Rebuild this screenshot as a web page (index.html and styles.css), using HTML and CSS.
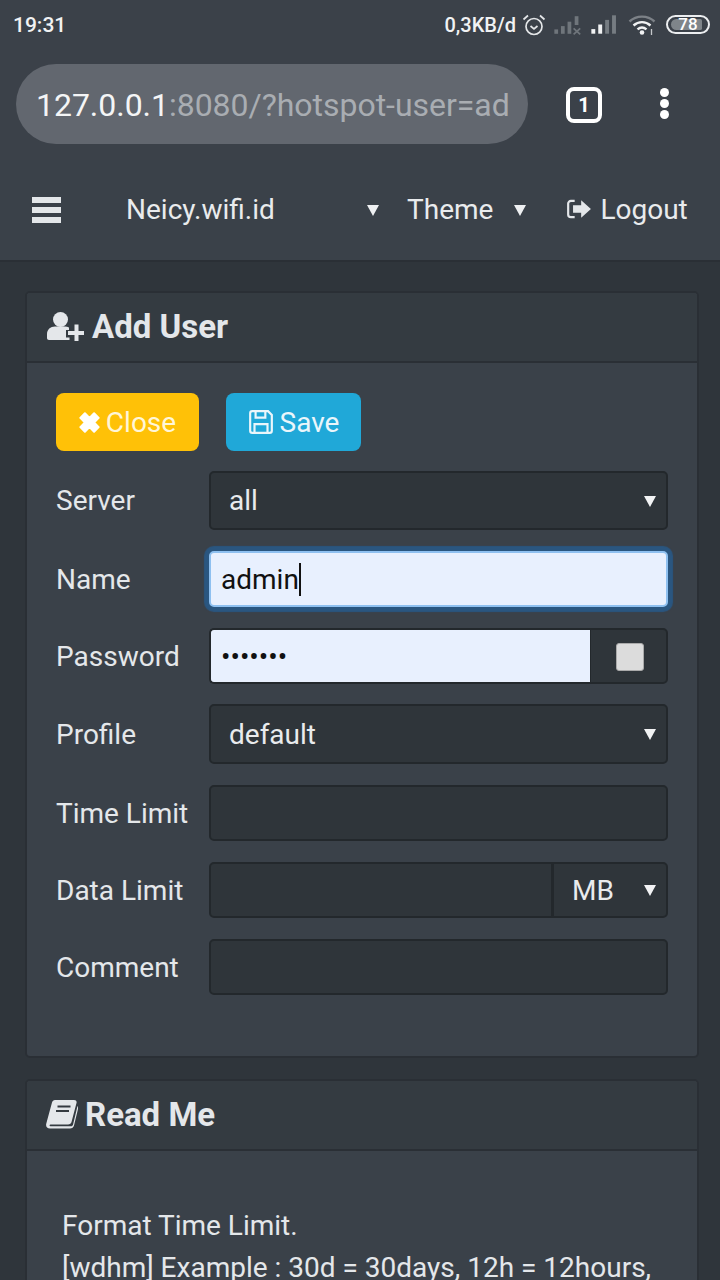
FILE: index.html
```html
<!DOCTYPE html>
<html lang="en">
<head>
<meta charset="utf-8">
<title>Add User</title>
<link rel="stylesheet" href="styles.css">
</head>
<body>
<div class="screen">
  <div class="status">
    <span class="clock">19:31</span>
    <div class="status-right">
      <span class="speed">0,3KB/d</span>
      <svg class="ic-alarm" viewBox="0 0 24 24" width="24" height="24" fill="none" stroke="#e4e6e8" stroke-width="1.7"><circle cx="12" cy="13.5" r="8"/><path d="M8.5 13l3.5 3 3.5-3"/><path d="M1.5 6.5L6 2.5M22.5 6.5L18 2.5"/></svg>
      <svg class="ic-sig1" viewBox="0 0 25 20" width="28" height="22"><g fill="#6f757b"><rect x="1" y="14" width="3.4" height="4"/><rect x="7" y="11" width="3.4" height="7"/><rect x="13" y="7" width="3.4" height="11"/><rect x="19.500" y="2" width="3.400" height="8"/></g><path d="M18.500 13l6 5.500M24.500 13l-6 5.500" stroke="#6f757b" stroke-width="1.600"/></svg>
      <svg class="ic-sig2" viewBox="0 0 24 20" width="28" height="23"><rect x="1" y="14" width="3.4" height="4" fill="#f1f2f3"/><rect x="7" y="10" width="3.4" height="8" fill="#f1f2f3"/><rect x="13" y="6" width="3.400" height="12" fill="#767c82"/><rect x="19" y="2" width="3.400" height="16" fill="#767c82"/></svg>
      <svg class="ic-wifi" viewBox="0 0 28 22" width="28" height="22" fill="none"><path d="M1.500 7.500C8.500 1 19.500 1 26.500 7.500" stroke="#7c8187" stroke-width="2.400"/><path d="M5.500 11.500C10.500 7 17.500 7 22.500 11.500" stroke="#f1f2f3" stroke-width="2.400"/><path d="M9.500 15.300C12.500 12.800 15.500 12.800 18.500 15.300" stroke="#f1f2f3" stroke-width="2.400"/><circle cx="14" cy="18.500" r="2.300" fill="#f1f2f3"/><path d="M23.500 15v6" stroke="#c5c8cb" stroke-width="1.300"/></svg>
      <div class="battery"><span class="battery-fill"></span><span class="battery-num">78</span></div>
    </div>
  </div>

  <div class="toolbar">
    <div class="urlbar"><span class="host">127.0.0.1</span><span class="path">:8080/?hotspot-user=ad</span></div>
    <div class="tabs">1</div>
    <div class="dots"><i></i><i></i><i></i></div>
  </div>

  <nav class="navbar">
    <div class="burger"><i></i><i></i><i></i></div>
    <span class="brand">Neicy.wifi.id</span>
    <svg class="tri nav-tri1" viewBox="0 0 12 12" width="12" height="12"><path d="M0 1h12L6 12z" fill="#eef0f2"/></svg>
    <span class="theme">Theme</span>
    <svg class="tri nav-tri2" viewBox="0 0 12 12" width="12" height="12"><path d="M0 1h12L6 12z" fill="#eef0f2"/></svg>
    <span class="logout">
      <svg viewBox="0 0 24 20" width="26" height="22"><path d="M8 2.500H4.500A2.500 2.500 0 0 0 2 5v10a2.500 2.500 0 0 0 2.500 2.500H8" fill="none" stroke="#e4e7ea" stroke-width="2"/><path d="M6.500 6.500h7.500V2l9 8-9 8v-4.500H6.500z" fill="#e4e7ea"/></svg>
      Logout
    </span>
  </nav>

  <main class="content">
    <section class="card card-form">
      <h3 class="card-head">
        <svg viewBox="0 0 38 30" width="38" height="30"><circle cx="14.500" cy="8.500" r="7.500" fill="#e4e7ea"/><path d="M1 27v-4c0-4.500 3.500-7.500 8-7.500h10c1.500 0 2.800.3 4 .9v2.600h-3v7.500h3.500V29H3c-1.200 0-2-.8-2-2z" fill="#e4e7ea"/><path d="M28.500 13.500h4V20H38v4h-5.500v6h-4v-6H22v-4h6.500z" fill="#e4e7ea"/></svg>
        Add User
      </h3>
      <div class="card-body">
        <div class="btns">
          <button class="btn btn-warn">
            <svg viewBox="2 2 16 16" width="21" height="21"><path d="M3 6.500L6.500 3 10 6.500 13.500 3 17 6.500 13.500 10 17 13.500 13.500 17 10 13.500 6.500 17 3 13.500 6.500 10z" fill="#fff" stroke="#fff" stroke-width="1.500" stroke-linejoin="round"/></svg>
            Close
          </button>
          <button class="btn btn-info">
            <svg viewBox="0 0 24 24" width="26" height="26" fill="none" stroke="#eaf6fb" stroke-width="2"><path d="M2 4a2 2 0 0 1 2-2h14.500L22 5.500V20a2 2 0 0 1-2 2H4a2 2 0 0 1-2-2z"/><path d="M7 2v6h9V2"/><path d="M6 22v-8h12v8"/></svg>
            Save
          </button>
        </div>
        <div class="row row-59"><label>Server</label><div class="field select"><span>all</span><svg viewBox="0 0 12 12" width="12" height="12"><path d="M0 1h12L6 12z" fill="#f2f3f4"/></svg></div></div>
        <div class="row row-56"><label>Name</label><div class="field focus"><span>admin</span><i class="caret"></i></div></div>
        <div class="row row-pass"><label>Password</label>
          <div class="group">
            <div class="field autofill"><span>•••••••</span></div>
            <div class="addon"><i class="check"></i></div>
          </div>
        </div>
        <div class="row row-60"><label>Profile</label><div class="field select"><span>default</span><svg viewBox="0 0 12 12" width="12" height="12"><path d="M0 1h12L6 12z" fill="#f2f3f4"/></svg></div></div>
        <div class="row row-56"><label>Time Limit</label><div class="field"></div></div>
        <div class="row row-56"><label>Data Limit</label>
          <div class="group">
            <div class="field data-input"></div>
            <div class="field select unit"><span>MB</span><svg viewBox="0 0 12 12" width="12" height="12"><path d="M0 1h12L6 12z" fill="#f2f3f4"/></svg></div>
          </div>
        </div>
        <div class="row row-56"><label>Comment</label><div class="field"></div></div>
      </div>
    </section>

    <section class="card">
      <h3 class="card-head head-readme">
        <svg viewBox="0 0 32 30" width="32" height="30"><path d="M9 1h19c2 0 3 1.300 2.500 3l-5 19c-.4 1.500-1.600 2.500-3.500 2.500H5c-1.800 0-2 1.800 0 1.800h20c1 0 1.800-.6 2-1.500L31.500 7c.8 1 .8 2 .5 3l-4 16.500c-.5 2-2 3-4 3H4c-3 0-4.500-2.200-3.700-5L6 3.500C6.400 2 7.500 1 9 1z" fill="#e4e7ea"/><path d="M11.500 7.500h13M10 12h13" stroke="#343a40" stroke-width="2.200"/></svg>
        Read Me
      </h3>
      <div class="card-body readme">
        <p>Format Time Limit.<br>[wdhm] Example : 30d = 30days, 12h = 12hours,</p>
      </div>
    </section>
  </main>
</div>
</body>
</html>
```
FILE: styles.css
```css
* { box-sizing: border-box; }
html, body { margin: 0; padding: 0; }
body { width: 720px; height: 1280px; overflow: hidden; background: #2f353b; font-family: Roboto, "Noto Sans", sans-serif; color: #e4e7ea; }
.screen { width: 720px; height: 1280px; overflow: hidden; display: flex; flex-direction: column; }

.status { height: 48px; padding: 1px 10px 0 13px; background: #3b4149; display: flex; justify-content: space-between; align-items: center; color: #f1f2f3; flex: none; }
.clock { font-size: 21px; font-weight: 500; }
.status-right { display: flex; align-items: center; }
.speed { font-size: 20px; font-weight: 500; margin-right: 6px; }
.ic-alarm { margin-right: 7px; }
.ic-sig1 { margin-right: 9px; }
.ic-sig2 { margin-right: 10px; }
.ic-wifi { margin-right: 10px; }
.battery { width: 44px; height: 19px; border: 2px solid #eceef0; border-radius: 10px; position: relative; overflow: hidden; display: flex; align-items: center; justify-content: center; }
.battery-fill { position: absolute; left: 3px; top: 2px; bottom: 2px; width: 31px; background: #7f858a; border-radius: 6px 2px 2px 6px; }
.battery-num { position: relative; font-size: 17px; font-weight: 500; color: #fff; line-height: 15px; }

.toolbar { height: 112px; background: #3b4149; display: flex; align-items: flex-start; padding: 16px 0 0 16px; flex: none; }
.urlbar { width: 512px; height: 80px; border-radius: 40px; background: #62676f; padding-left: 20px; font-size: 32px; letter-spacing: -0.03px; line-height: 82px; white-space: nowrap; overflow: hidden; }
.host { color: #f4f5f6; }
.path { color: #a9adb2; }
.tabs { width: 36px; height: 36px; margin: 23px 0 0 38px; border: 4px solid #fff; border-radius: 8px; color: #fff; font-size: 20px; font-weight: 700; line-height: 28px; text-align: center; }
.dots { display: flex; flex-direction: column; gap: 2px; margin: 24px 0 0 58px; }
.dots i { display: block; width: 9px; height: 9px; border-radius: 50%; background: #fff; }

.navbar { height: 102px; background: #3a4149; border-bottom: 2px solid #2a2f35; display: flex; align-items: center; padding: 0 32px 1px; font-size: 28px; color: #e9ebed; flex: none; }
.burger { width: 29px; display: flex; flex-direction: column; gap: 4px; }
.burger i { display: block; height: 6px; background: #e4e7ea; }
.brand { margin-left: 65px; width: 241px; }
.nav-tri1 { flex: none; }
.theme { margin-left: 28px; }
.nav-tri2 { margin-left: 21px; flex: none; }
.logout { margin-left: 40px; display: flex; align-items: center; gap: 8px; white-space: nowrap; }
.logout svg { margin-top: -1px; }

.content { padding: 29px 21px 0 25px; flex: 1; }
.card { background: #3a4149; border: 2px solid #2a2f35; border-radius: 5px; }
.card-form { height: 767px; margin-bottom: 21px; }
.card-head { margin: 0; height: 70px; padding: 0 0 2px 19px; background: #343b41; border-bottom: 2px solid #2a2f35; display: flex; align-items: center; gap: 8px; font-size: 33px; font-weight: 700; color: #e4e7ea; border-radius: 3px 3px 0 0; }
.head-readme { gap: 7px; }
.card-body { padding: 30px 29px 0; }
.btns { display: flex; gap: 27px; margin-bottom: 20px; height: 58px; }
.btn { height: 58px; border: 0; border-radius: 8px; font-family: inherit; font-size: 28px; display: flex; align-items: center; justify-content: center; gap: 6px; padding: 0; }
.btn-warn { width: 143px; background: #ffc107; color: #fff6d8; }
.btn-info { width: 135px; background: #20a8d8; color: #eaf6fb; }

.row { display: flex; align-items: center; margin-bottom: 21px; font-size: 28px; }
.row-59 { height: 59px; }
.row-56 { height: 56px; }
.row-pass { height: 56px; margin-bottom: 20px; }
.row-60 { height: 60px; }
.row label { width: 153px; flex: none; color: #e4e7ea; }
.field { flex: 1; height: 100%; background: #2f353a; border: 2px solid #23282c; border-radius: 5px; display: flex; align-items: center; padding: 0 10px; color: #e9ebed; min-width: 0; }
.select { padding: 0 10px 0 18px; justify-content: space-between; }
.focus { background: #e8f0fe; color: #111; border: 2px solid #8ec0f0; box-shadow: 0 0 1px 5px #2a5680; }
.caret { display: inline-block; width: 2px; height: 33px; background: #111; margin-left: 0; }
.group { flex: 1; height: 100%; display: flex; min-width: 0; }
.autofill { background: #e8f0fe; color: #111; border-radius: 5px 0 0 5px; border-right: 0; }
.autofill span { font-size: 28px; }
.addon { width: 78px; flex: none; padding: 2px 0 0 2px; background: #2f353a; border: 2px solid #23282c; border-left: 1px solid #23282c; border-radius: 0 5px 5px 0; display: flex; align-items: center; justify-content: center; }
.check { display: block; width: 28px; height: 28px; background: #dcdcdc; border: 1px solid #aaa; border-radius: 3px; }
.data-input { border-radius: 5px 0 0 5px; }
.unit { flex: none; width: 115px; padding-left: 18px; border-radius: 0 5px 5px 0; border-left: 1px solid #23282c; }
.readme { padding: 54px 35px 0; }
.readme p { margin: 0; font-size: 28px; line-height: 42px; white-space: nowrap; color: #e4e7ea; }
```
